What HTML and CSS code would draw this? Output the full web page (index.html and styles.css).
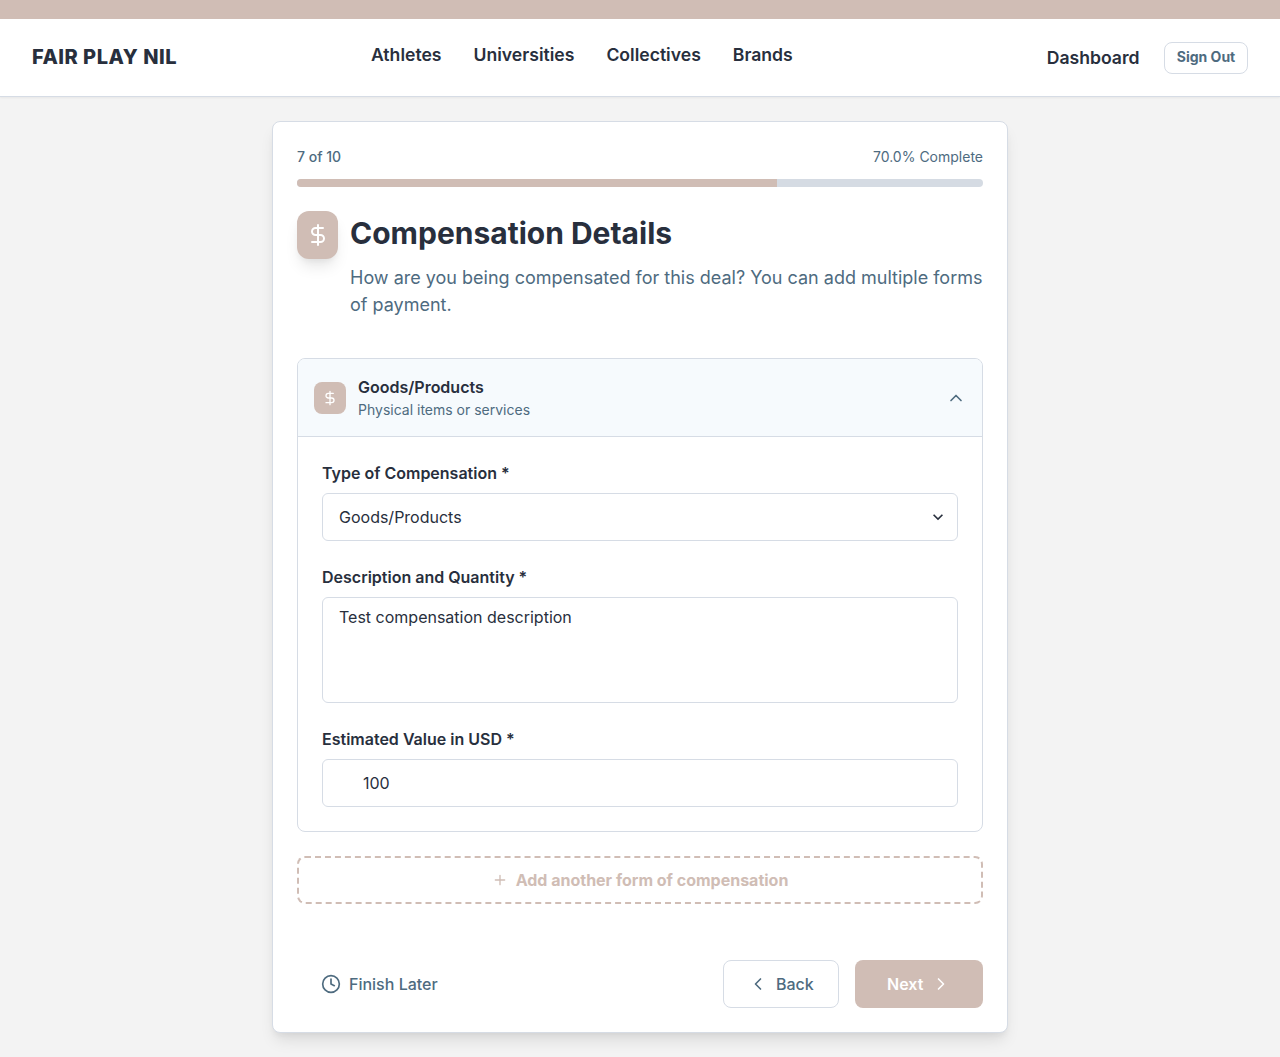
FILE: index.html
```html
<!DOCTYPE html>
<html lang="en">
<head>
<meta charset="utf-8">
<title>Fair Play NIL</title>
<link rel="stylesheet" href="styles.css">
</head>
<body>
<div class="topbar"></div>
<header class="header">
  <a class="brand">FAIR PLAY NIL</a>
  <nav class="nav"><a>Athletes</a><a>Universities</a><a>Collectives</a><a>Brands</a></nav>
  <div class="account"><a class="dashboard">Dashboard</a><button class="signout">Sign Out</button></div>
</header>
<main class="card">
  <div class="progress-labels"><span class="step">7 of 10</span><span class="percent">70.0% Complete</span></div>
  <div class="progress"><div class="progress-fill" style="width:70%"></div></div>
  <section class="intro">
    <div class="intro-icon"><svg width="24" height="24" viewBox="0 0 24 24"><path d="M12 2v20M17 5H9.5a3.5 3.5 0 0 0 0 7h5a3.5 3.5 0 0 1 0 7H6"/></svg></div>
    <div class="intro-text">
      <h1>Compensation Details</h1>
      <p>How are you being compensated for this deal? You can add multiple forms of payment.</p>
    </div>
  </section>
  <section class="panel">
    <div class="panel-head">
      <div class="panel-icon"><svg width="16" height="16" viewBox="0 0 24 24"><path d="M12 2v20M17 5H9.5a3.5 3.5 0 0 0 0 7h5a3.5 3.5 0 0 1 0 7H6"/></svg></div>
      <div class="panel-title"><strong>Goods/Products</strong><span>Physical items or services</span></div>
      <svg class="collapse" width="20" height="20" viewBox="0 0 24 24"><path d="m18 15-6-6-6 6"/></svg>
    </div>
    <div class="panel-body">
      <div class="field">
        <label for="type">Type of Compensation *</label>
        <div class="select-wrap">
          <select id="type" class="control"><option>Goods/Products</option></select>
          <svg class="select-arrow" width="20" height="20" viewBox="0 0 24 24"><path d="M16.59 8.59 12 13.17 7.41 8.59 6 10l6 6 6-6z"/></svg>
        </div>
      </div>
      <div class="field">
        <label for="desc">Description and Quantity *</label>
        <textarea id="desc" class="control area">Test compensation description</textarea>
      </div>
      <div class="field">
        <label for="value">Estimated Value in USD *</label>
        <input id="value" class="control value" value="100">
      </div>
    </div>
  </section>
  <button class="add"><svg width="16" height="16" viewBox="0 0 24 24"><path d="M5 12h14M12 5v14"/></svg>Add another form of compensation</button>
  <footer class="actions">
    <button class="later"><svg width="20" height="20" viewBox="0 0 24 24"><circle cx="12" cy="12" r="10"/><path d="M12 6v6l4 2"/></svg>Finish Later</button>
    <button class="back"><svg width="20" height="20" viewBox="0 0 24 24"><path d="m15 18-6-6 6-6"/></svg>Back</button>
    <button class="next">Next<svg width="20" height="20" viewBox="0 0 24 24"><path d="m9 18 6-6-6-6"/></svg></button>
  </footer>
</main>
</body>
</html>
```
FILE: styles.css
```css
* { box-sizing: border-box; margin: 0; }
:root { --ink: #282f3d; --muted: #4e6b7f; --rose: #d0bdb5; --line: #d6dce5; }
body { font: 16px/24px Inter, sans-serif; color: var(--ink); background: #f3f3f3; min-height: 1057px; }
button, input, select, textarea { font: inherit; color: inherit; letter-spacing: inherit; }
svg { fill: none; stroke: currentColor; stroke-width: 2; stroke-linecap: round; stroke-linejoin: round; flex: none; }
.topbar { height: 19px; background: var(--rose); }
.header { height: 78px; display: flex; align-items: center; padding: 0 32px; background: #fff; border-bottom: 1px solid var(--line); box-shadow: 0 1px 2px rgba(0,0,0,.05); }
.brand { width: 339px; font-size: 20px; font-weight: 800; letter-spacing: .5px; padding-bottom: 1px; }
.nav { display: flex; gap: 32px; font-size: 17.6px; font-weight: 600; padding-bottom: 5px; }
.account { display: flex; align-items: center; gap: 24.5px; margin-left: auto; }
.dashboard { font-size: 17.6px; font-weight: 600; }
.signout { width: 84px; height: 32px; padding: 0 0 2px; font-size: 14px; font-weight: 700; color: var(--muted); background: #fff; border: 1px solid var(--line); border-radius: 8px; }
.card { width: 736px; height: 912px; margin: 24px auto 0; padding: 24px; background: #fff; border: 1px solid var(--line); border-radius: 8px; box-shadow: 0 10px 15px -3px rgba(0,0,0,.1), 0 4px 6px -2px rgba(0,0,0,.05); }
.progress-labels { display: flex; justify-content: space-between; font-size: 14px; line-height: 21px; color: var(--muted); margin-bottom: 12px; }
.step { font-weight: 500; }
.progress { height: 8px; background: #d5dbe3; border-radius: 4px; overflow: hidden; }
.progress-fill { height: 8px; background: var(--rose); }
.intro { display: flex; gap: 12px; margin-top: 24px; align-items: flex-start; }
.intro-icon { width: 41px; height: 48px; flex: none; display: grid; place-items: center; color: #fff; background: var(--rose); border-radius: 12px; box-shadow: 0 10px 15px -3px rgba(0,0,0,.1), 0 4px 6px -2px rgba(0,0,0,.05); }
h1 { font-size: 30px; line-height: 45px; font-weight: 700; }
.intro-text p { margin-top: 8px; font-size: 18px; line-height: 27px; color: var(--muted); }
.panel { margin-top: 40px; height: 474px; border: 1px solid var(--line); border-radius: 8px; overflow: hidden; }
.panel-head { height: 78px; display: flex; align-items: center; gap: 12px; padding: 0 16px; background: #f6fafd; border-bottom: 1px solid var(--line); }
.panel-icon { width: 32px; height: 32px; display: grid; place-items: center; color: #fff; background: var(--rose); border-radius: 8px; }
.panel-title { flex: 1; display: flex; flex-direction: column; }
.panel-title strong { font-weight: 600; }
.panel-title span { font-size: 14px; line-height: 21px; color: var(--muted); }
.collapse { color: var(--muted); }
.panel-body { padding: 24px; display: flex; flex-direction: column; gap: 24px; }
.field label { display: block; font-weight: 600; margin-bottom: 8px; }
.control { display: block; width: 100%; height: 48px; padding: 0 16px; border: 1px solid var(--line); border-radius: 6px; background: #fff; appearance: none; outline: 0; }
.select-wrap { display: grid; align-items: center; }
.select-wrap > * { grid-area: 1 / 1; }
.select-arrow { justify-self: end; margin-right: 10px; fill: currentColor; stroke: none; pointer-events: none; }
.area { height: 106px; padding-top: 8px; line-height: 22px; resize: none; }
.value { padding-left: 40px; }
.add { width: 100%; height: 48px; margin-top: 24px; display: flex; align-items: center; justify-content: center; gap: 8px; background: #fff; border: 2px dashed var(--rose); border-radius: 8px; color: var(--rose); font-weight: 700; }
.actions { display: flex; margin-top: 56px; gap: 16px; }
.actions button { height: 48px; display: flex; align-items: center; border: 0; border-radius: 8px; background: #fff; font-weight: 500; color: var(--muted); gap: 8px; padding: 0 24px; }
.actions .later { margin-right: auto; }
.actions .back { width: 116px; border: 1px solid var(--line); }
.actions .next { width: 128px; padding: 0 32px; background: var(--rose); color: #fff; font-weight: 600; }
```
